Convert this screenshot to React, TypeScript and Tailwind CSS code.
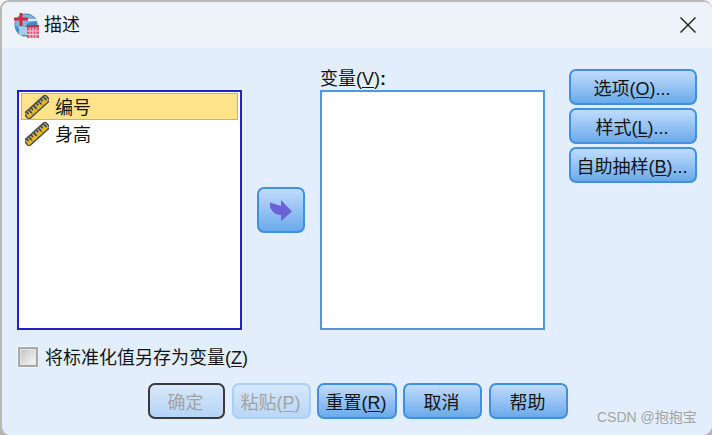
import React from "react";

const FONT = "font-['Liberation_Sans','Noto_Sans_CJK_SC',sans-serif]";

function Key({ children }: { children: React.ReactNode }) {
  return <span className="underline underline-offset-2 decoration-1">{children}</span>;
}

function Btn({
  children,
  className = "",
}: {
  children: React.ReactNode;
  className?: string;
}) {
  return (
    <div
      className={`flex items-center justify-center h-9 pt-[3px] pr-[2px] rounded-[7px] border-2 text-[18px] leading-none whitespace-nowrap ${className}`}
    >
      {children}
    </div>
  );
}

const BLUE =
  "border-[#3f90e2] bg-gradient-to-b from-[#c0dcfd] to-[#6aaaea] text-[#141414]";

function Ruler() {
  return (
    <svg width="24" height="24" viewBox="0 0 24 24" className="shrink-0">
      <g transform="rotate(-42 12 12)">
        <rect x="-3" y="7.500" width="30" height="9" rx="1" fill="#4a4b42" />
        <rect x="-1.500" y="9" width="27" height="6" fill="#a8a68e" />
        <path d="M-1.500 11.500h5v3.500h-5zM5 11.500h5v3.500H5zM11.500 11.500h5v3.500h-5zM18 11.500h5v3.500h-5z" fill="#f5b800" />
        <path d="M1 9v2.500M4 9v4M7 9v2.500M10.500 9v4M14 9v2.500M17 9v4M20 9v2.500M23.500 9v4" stroke="#33332a" strokeWidth="1.300" />
      </g>
    </svg>
  );
}

function AppIcon() {
  return (
    <svg width="25" height="25" viewBox="0 0 25 25" className="shrink-0">
      <circle cx="12" cy="12" r="11.500" fill="#4b8ac4" />
      <path d="M1 12a11 11 0 0 1 21-4l-8 2-6 8z" fill="#82b4de" />
      <rect x="13" y="6" width="10" height="2" fill="#dcebf7" />
      <rect x="5" y="14" width="8" height="8" fill="#a9cbe8" />
      <path d="M5.500 0h3v4.500H14v3H8.500V13h-3V7.500H0v-3h5.500z" fill="#d8283c" />
      <rect x="13" y="12" width="12" height="2.500" fill="#a83a58" />
      <rect x="13" y="14.500" width="12" height="10.500" fill="#e0527a" />
      <path d="M13 18h12M13 21.500h12M16 14.500V25M19 14.500V25M22 14.500V25" stroke="#f8d0dc" strokeWidth="1" />
    </svg>
  );
}

function Row({ label, selected }: { label: string; selected?: boolean }) {
  return (
    <div
      className={`flex items-center h-[27px] pl-[3px] gap-[6px] text-[18px] leading-none text-[#141414] border ${
        selected ? "bg-[#ffe38a] border-[#c9b26e]" : "border-transparent"
      }`}
    >
      <Ruler />
      <span className="pt-[3px]">{label}</span>
    </div>
  );
}

export default function App() {
  return (
    <div className={`w-[712px] h-[435px] bg-gradient-to-b from-[#f4f5f7] to-[#b4b4b4] overflow-hidden ${FONT}`}>
      <div className="w-[712px] h-[435px] flex flex-col rounded-[9px] border-l-2 border-t-2 border-[#b8b8b8] overflow-hidden bg-[#e2eefb]">
        <div className="h-[46px] shrink-0 bg-[#eef3fa] flex items-center pl-[12px] pr-[15px]">
          <AppIcon />
          <span className="ml-[5px] text-[18px] leading-none text-[#141414]">描述</span>
          <svg width="18" height="18" viewBox="0 0 18 18" className="ml-auto">
            <path d="M1.500 1.500l15 15M16.500 1.500l-15 15" stroke="#1a1a1a" strokeWidth="1.400" />
          </svg>
        </div>

        <div className="flex pt-[21px] pl-[15px]">
          <div className="w-[225px] h-[240px] mt-[21px] border-2 border-[#2222c4] bg-white p-[2px] pt-[1px] pr-[2px]">
            <Row label="编号" selected />
            <Row label="身高" />
          </div>

          <div className="ml-[15px] mt-[118px] w-[48px] h-[46px] rounded-[7px] border-2 border-[#3f90e2] bg-gradient-to-b from-[#c0dcfd] to-[#6aaaea] flex items-center justify-center">
            <svg width="22" height="21" viewBox="0 0 22 21">
              <path d="M0 2.500L11 6V0l11 11.500L11 21v-6C6 15 2 12 0 7z" fill="#6a62d6" />
            </svg>
          </div>

          <div className="ml-[15px] w-[225px] flex flex-col">
            <div className="h-[21px] text-[18px] leading-[20px] text-[#141414]">
              变量(<Key>V</Key>)<span className="font-bold">:</span>
            </div>
            <div className="h-[240px] border-2 border-[#4f97dd] bg-white" />
          </div>

          <div className="ml-[24px] w-[128px] flex flex-col gap-[3px]">
            <Btn className={BLUE}>
              选项(<Key>O</Key>)...
            </Btn>
            <Btn className={BLUE}>
              样式(<Key>L</Key>)...
            </Btn>
            <Btn className={BLUE}>
              自助抽样(<Key>B</Key>)...
            </Btn>
          </div>
        </div>

        <div className="flex items-center mt-[16px] pl-[15px] h-[22px]">
          <div className="w-[22px] h-[22px] bg-[#f2f7fc] p-px">
            <div className="w-full h-full border-2 border-[#a9a9a9] bg-[#e4e4e4] p-px">
              <div className="w-full h-full bg-gradient-to-br from-[#c6c6c6] to-[#f6f6f6]" />
            </div>
          </div>
          <span className="ml-[6px] pt-[2px] text-[18px] leading-none text-[#141414]">
            将标准化值另存为变量(<Key>Z</Key>)
          </span>
        </div>

        <div className="flex mt-[15px] pl-[146px]">
          <Btn className="w-[77px] border-[#3a3a3a] bg-gradient-to-b from-[#d8e8fa] to-[#b4d4f6] text-[#a3a3a3]">
            确定
          </Btn>
          <Btn className="w-[79px] ml-[7px] border-[#a9d0f6] bg-gradient-to-b from-[#d6e7fa] to-[#b8d7f7] text-[#a3a3a3]">
            粘贴(<Key>P</Key>)
          </Btn>
          <Btn className={`w-[80px] ml-[6px] ${BLUE}`}>
            重置(<Key>R</Key>)
          </Btn>
          <Btn className={`w-[79px] ml-[6px] ${BLUE}`}>取消</Btn>
          <Btn className={`w-[79px] ml-[7px] ${BLUE}`}>帮助</Btn>
          <span className="ml-[29px] mt-[27px] text-[14px] leading-none text-[#a4a4a4] whitespace-nowrap">
            CSDN @抱抱宝
          </span>
        </div>
      </div>
    </div>
  );
}
